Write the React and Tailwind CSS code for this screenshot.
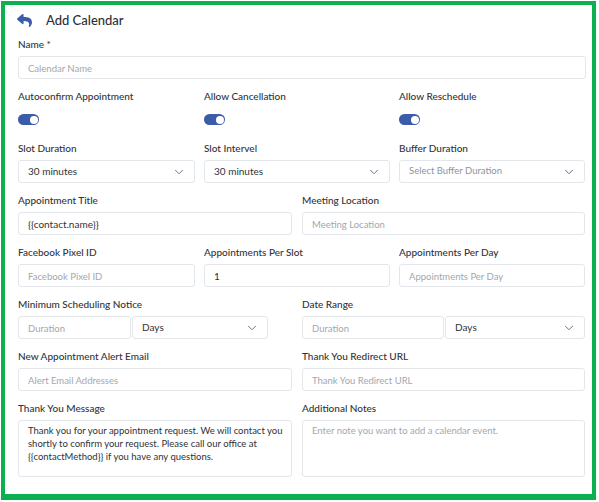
import React from 'react';
import { FaReply } from 'react-icons/fa';
import { ChevronDown } from 'lucide-react';

const Label = ({ children }) => (
  <div className="mb-1 h-4 text-[10px] font-medium leading-4 text-[#30343a]">{children}</div>
);

const TextInput = ({ placeholder, value, width = 'w-full' }) => (
  <input
    type="text"
    placeholder={placeholder}
    defaultValue={value}
    className={`block h-[23px] min-w-0 shrink-0 rounded-[3px] border border-[#e3e6ea] bg-white pl-[9px] text-[10px] text-[#2f3237] outline-none placeholder:text-[9.5px] placeholder:text-[#a3a7ae] ${width}`}
  />
);

const Select = ({ value, placeholder, className = '' }) => (
  <div
    className={`flex h-[23px] w-full min-w-0 items-center justify-between rounded-[3px] border border-[#e3e6ea] bg-white pl-[9px] pr-[8px] ${className}`}
  >
    {value ? (
      <span className="text-[10px] text-[#2f3237]">{value}</span>
    ) : (
      <span className="text-[9.5px] text-[#8e939b]">{placeholder}</span>
    )}
    <ChevronDown size={14} strokeWidth={1.5} className="text-[#5c6168]" />
  </div>
);

const Toggle = () => (
  <div className="flex h-[11px] w-[21px] items-center justify-end rounded-full bg-[#3c5ba9] pr-[1.5px]">
    <div className="h-[8px] w-[8px] rounded-full bg-white" />
  </div>
);

const Field = ({ label, children }) => (
  <div className="mb-[9px] min-w-0">
    <Label>{label}</Label>
    {children}
  </div>
);

export default function App() {
  return (
    <div className="bg-white pl-px pt-px font-['Lato',sans-serif]">
      <div className="h-[499px] w-[595px] border-x-4 border-t-4 border-b-[6px] border-[#0bb14f] bg-white pl-[13px] pr-[6px]">
        <div className="flex h-[31px] items-center">
          <FaReply className="ml-[-1px] text-[15px] text-[#3c5ba9]" />
          <span className="ml-[14px] text-[13px] font-medium text-[#2b2f35]">Add Calendar</span>
        </div>

        <Field label="Name *">
          <TextInput placeholder="Calendar Name" />
        </Field>

        <div className="grid grid-cols-[177px_186px_186px] gap-x-[9px]">
          {['Autoconfirm Appointment', 'Allow Cancellation', 'Allow Reschedule'].map((l) => (
            <div key={l} className="h-[52px]">
              <Label>{l}</Label>
              <div className="pt-[6px]">
                <Toggle />
              </div>
            </div>
          ))}
        </div>

        <div className="grid grid-cols-[177px_186px_186px] gap-x-[9px]">
          <Field label="Slot Duration">
            <Select value="30 minutes" />
          </Field>
          <Field label="Slot Intervel">
            <Select value="30 minutes" />
          </Field>
          <Field label="Buffer Duration">
            <Select placeholder="Select Buffer Duration" />
          </Field>
        </div>

        <div className="grid grid-cols-[274px_283px] gap-x-[10px]">
          <Field label="Appointment Title">
            <TextInput value="{{contact.name}}" />
          </Field>
          <Field label="Meeting Location">
            <TextInput placeholder="Meeting Location" />
          </Field>
        </div>

        <div className="grid grid-cols-[177px_186px_186px] gap-x-[9px]">
          <Field label="Facebook Pixel ID">
            <TextInput placeholder="Facebook Pixel ID" />
          </Field>
          <Field label="Appointments Per Slot">
            <TextInput value="1" />
          </Field>
          <Field label="Appointments Per Day">
            <TextInput placeholder="Appointments Per Day" />
          </Field>
        </div>

        <div className="grid grid-cols-[274px_283px] gap-x-[10px]">
          <Field label="Minimum Scheduling Notice">
            <div className="flex w-[250px]">
              <TextInput placeholder="Duration" width="w-[113px]" />
              <Select value="Days" className="ml-px" />
            </div>
          </Field>
          <Field label="Date Range">
            <div className="flex">
              <TextInput placeholder="Duration" width="w-[142px]" />
              <Select value="Days" className="ml-px" />
            </div>
          </Field>
        </div>

        <div className="grid grid-cols-[274px_283px] gap-x-[10px]">
          <Field label="New Appointment Alert Email">
            <TextInput placeholder="Alert Email Addresses" />
          </Field>
          <Field label="Thank You Redirect URL">
            <TextInput placeholder="Thank You Redirect URL" />
          </Field>
        </div>

        <div className="grid grid-cols-[274px_283px] gap-x-[10px]">
          <Field label="Thank You Message">
            <textarea
              readOnly
              defaultValue="Thank you for your appointment request. We will contact you shortly to confirm your request. Please call our office at {{contactMethod}} if you have any questions."
              className="block h-[57px] w-full resize-none rounded-[3px] border border-[#e3e6ea] bg-white pl-[9px] pr-[4px] pt-[3px] text-[9.5px] leading-[13px] text-[#2f3237] outline-none"
            />
          </Field>
          <Field label="Additional Notes">
            <textarea
              placeholder="Enter note you want to add a calendar event."
              className="block h-[57px] w-full resize-none rounded-[3px] border border-[#e3e6ea] bg-white px-[9px] pt-[3px] text-[9.5px] leading-[13px] outline-none placeholder:text-[#a3a7ae]"
            />
          </Field>
        </div>
      </div>
    </div>
  );
}
